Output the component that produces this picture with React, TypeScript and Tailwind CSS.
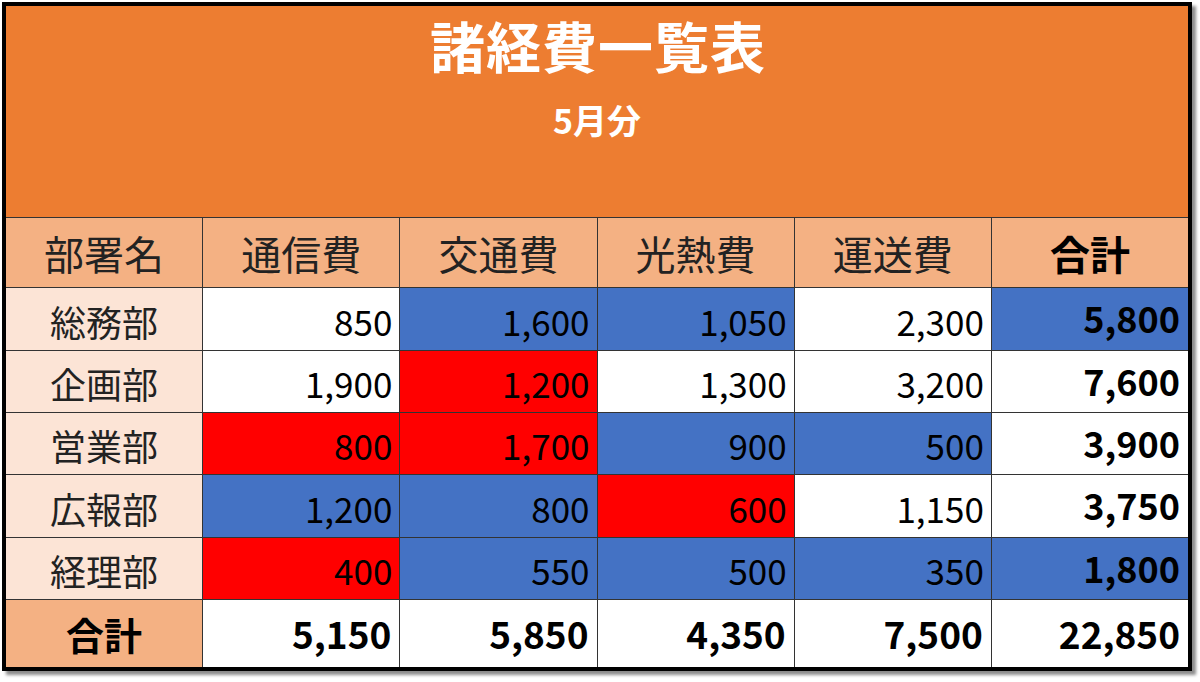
import React from "react"

type Cell = { v: string; c?: "blue" | "red" }

const headers = ["通信費", "交通費", "光熱費", "運送費"]

const rows: { name: string; cells: Cell[]; total: Cell }[] = [
  {
    name: "総務部",
    cells: [{ v: "850" }, { v: "1,600", c: "blue" }, { v: "1,050", c: "blue" }, { v: "2,300" }],
    total: { v: "5,800", c: "blue" },
  },
  {
    name: "企画部",
    cells: [{ v: "1,900" }, { v: "1,200", c: "red" }, { v: "1,300" }, { v: "3,200" }],
    total: { v: "7,600" },
  },
  {
    name: "営業部",
    cells: [{ v: "800", c: "red" }, { v: "1,700", c: "red" }, { v: "900", c: "blue" }, { v: "500", c: "blue" }],
    total: { v: "3,900" },
  },
  {
    name: "広報部",
    cells: [{ v: "1,200", c: "blue" }, { v: "800", c: "blue" }, { v: "600", c: "red" }, { v: "1,150" }],
    total: { v: "3,750" },
  },
  {
    name: "経理部",
    cells: [{ v: "400", c: "red" }, { v: "550", c: "blue" }, { v: "500", c: "blue" }, { v: "350", c: "blue" }],
    total: { v: "1,800", c: "blue" },
  },
]

const totals = ["5,150", "5,850", "4,350", "7,500", "22,850"]

function bg(c?: "blue" | "red") {
  if (c === "blue") return "bg-[#4472c4]"
  if (c === "red") return "bg-[#ff0000]"
  return "bg-white"
}

const font = "font-['Noto_Sans_CJK_JP','Noto_Sans',sans-serif]"

export default function App() {
  return (
    <div className={`w-[1200px] h-[682px] bg-white pt-[2px] pl-[2px] ${font}`}>
      <div className="w-[1190px] h-[669px] border-4 border-black shadow-[4px_4px_3px_rgba(0,0,0,0.45)] flex flex-col bg-[#333]">
        {/* title */}
        <div className="h-[211px] bg-[#ed7d31] flex flex-col items-center text-white font-bold">
          <h1 className="text-[55px] leading-none mt-[11px] tracking-[1px] pl-[2px]">諸経費一覧表</h1>
          <p className="text-[34px] leading-none mt-[31px]">5月分</p>
        </div>

        <div className="grid grid-cols-6 gap-px pt-px flex-1 grid-rows-[69px_62px_61px_61px_62px_61px_1fr]">
          {/* header */}
          <div className="bg-[#f4b183] flex items-center justify-center text-[40px] text-[#222]">部署名</div>
          {headers.map((h) => (
            <div key={h} className="bg-[#f4b183] flex items-center justify-center text-[40px] text-[#222]">
              {h}
            </div>
          ))}
          <div className="bg-[#f4b183] flex items-center justify-center text-[40px] font-bold text-black">合計</div>

          {rows.map((r) => (
            <React.Fragment key={r.name}>
              <div className="bg-[#fce4d6] flex items-center justify-center text-[36px] text-[#222] pt-[3px]">
                {r.name}
              </div>
              {r.cells.map((c, i) => (
                <div
                  key={i}
                  className={`${bg(c.c)} flex items-center justify-end pr-[7px] pt-[4px] text-[35px] text-black`}
                >
                  {c.v}
                </div>
              ))}
              <div
                className={`${bg(r.total.c)} flex items-center justify-end pr-[8px] pb-[4px] text-[36px] font-bold text-black`}
              >
                {r.total.v}
              </div>
            </React.Fragment>
          ))}

          {/* total row */}
          <div className="bg-[#f4b183] flex items-center justify-center text-[38px] font-bold text-black">合計</div>
          {totals.map((t) => (
            <div key={t} className="bg-white flex items-center justify-end pr-[8px] text-[37px] font-bold text-black">
              {t}
            </div>
          ))}
        </div>
      </div>
    </div>
  )
}
